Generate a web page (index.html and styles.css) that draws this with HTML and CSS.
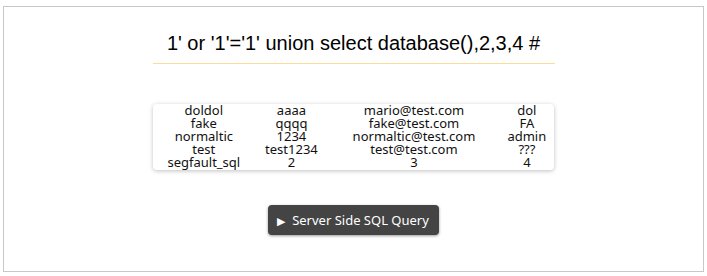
FILE: index.html
```html
<!DOCTYPE html>
<html>
<head>
<meta charset="utf-8">
<link rel="stylesheet" href="styles.css">
</head>
<body>
<div class="frame">
  <h1 class="title">1' or '1'='1' union select database(),2,3,4 #</h1>
  <div class="card">
    <table class="result">
      <tr><td>doldol</td><td>aaaa</td><td>mario@test.com</td><td>dol</td></tr>
      <tr><td>fake</td><td>qqqq</td><td>fake@test.com</td><td>FA</td></tr>
      <tr><td>normaltic</td><td>1234</td><td>normaltic@test.com</td><td>admin</td></tr>
      <tr><td>test</td><td>test1234</td><td>test@test.com</td><td>???</td></tr>
      <tr><td>segfault_sql</td><td>2</td><td>3</td><td>4</td></tr>
    </table>
  </div>
  <div class="actions">
    <button class="btn"><span class="tri">&#9654;</span>Server Side SQL Query</button>
  </div>
</div>
</body>
</html>
```
FILE: styles.css
```css
html, body { margin: 0; padding: 0; background: #fff; }
body { padding: 6px 3px 0 3px; }
.frame {
  box-sizing: border-box;
  width: 701px;
  height: 266px;
  border: 1px solid #c8c8c8;
  display: flex;
  flex-direction: column;
  align-items: center;
}
.title {
  margin: 25px 0 0 0;
  width: 402px;
  box-sizing: border-box;
  padding-bottom: 8px;
  border-bottom: 1px solid #fcdc9c;
  font-family: "Liberation Sans", Arial, sans-serif;
  font-weight: normal;
  font-size: 20px;
  line-height: 23px;
  text-align: center;
  color: #000;
}
.card {
  margin-top: 40px;
  width: 401px;
  height: 66px;
  overflow: hidden;
  border-radius: 4px;
  box-shadow: 0 1px 4px rgba(0,0,0,0.25);
  background: #fff;
}
.result {
  width: 100%;
  border-collapse: collapse;
  font-family: "Noto Sans", "Open Sans", sans-serif;
  font-size: 13px;
  line-height: 13px;
  color: #111;
}
.result td { padding: 0; text-align: center; }
.actions { margin-top: 35px; }
.btn {
  display: flex;
  align-items: center;
  height: 30px;
  padding: 0 10px 0 9px;
  background: #444;
  color: #fff;
  border: none;
  border-radius: 4px;
  box-shadow: 0 1px 3px rgba(0,0,0,0.4);
  font-family: "Noto Sans", "Open Sans", sans-serif;
  font-size: 13px;
}
.tri { font-size: 11px; margin-right: 7px; }
```
